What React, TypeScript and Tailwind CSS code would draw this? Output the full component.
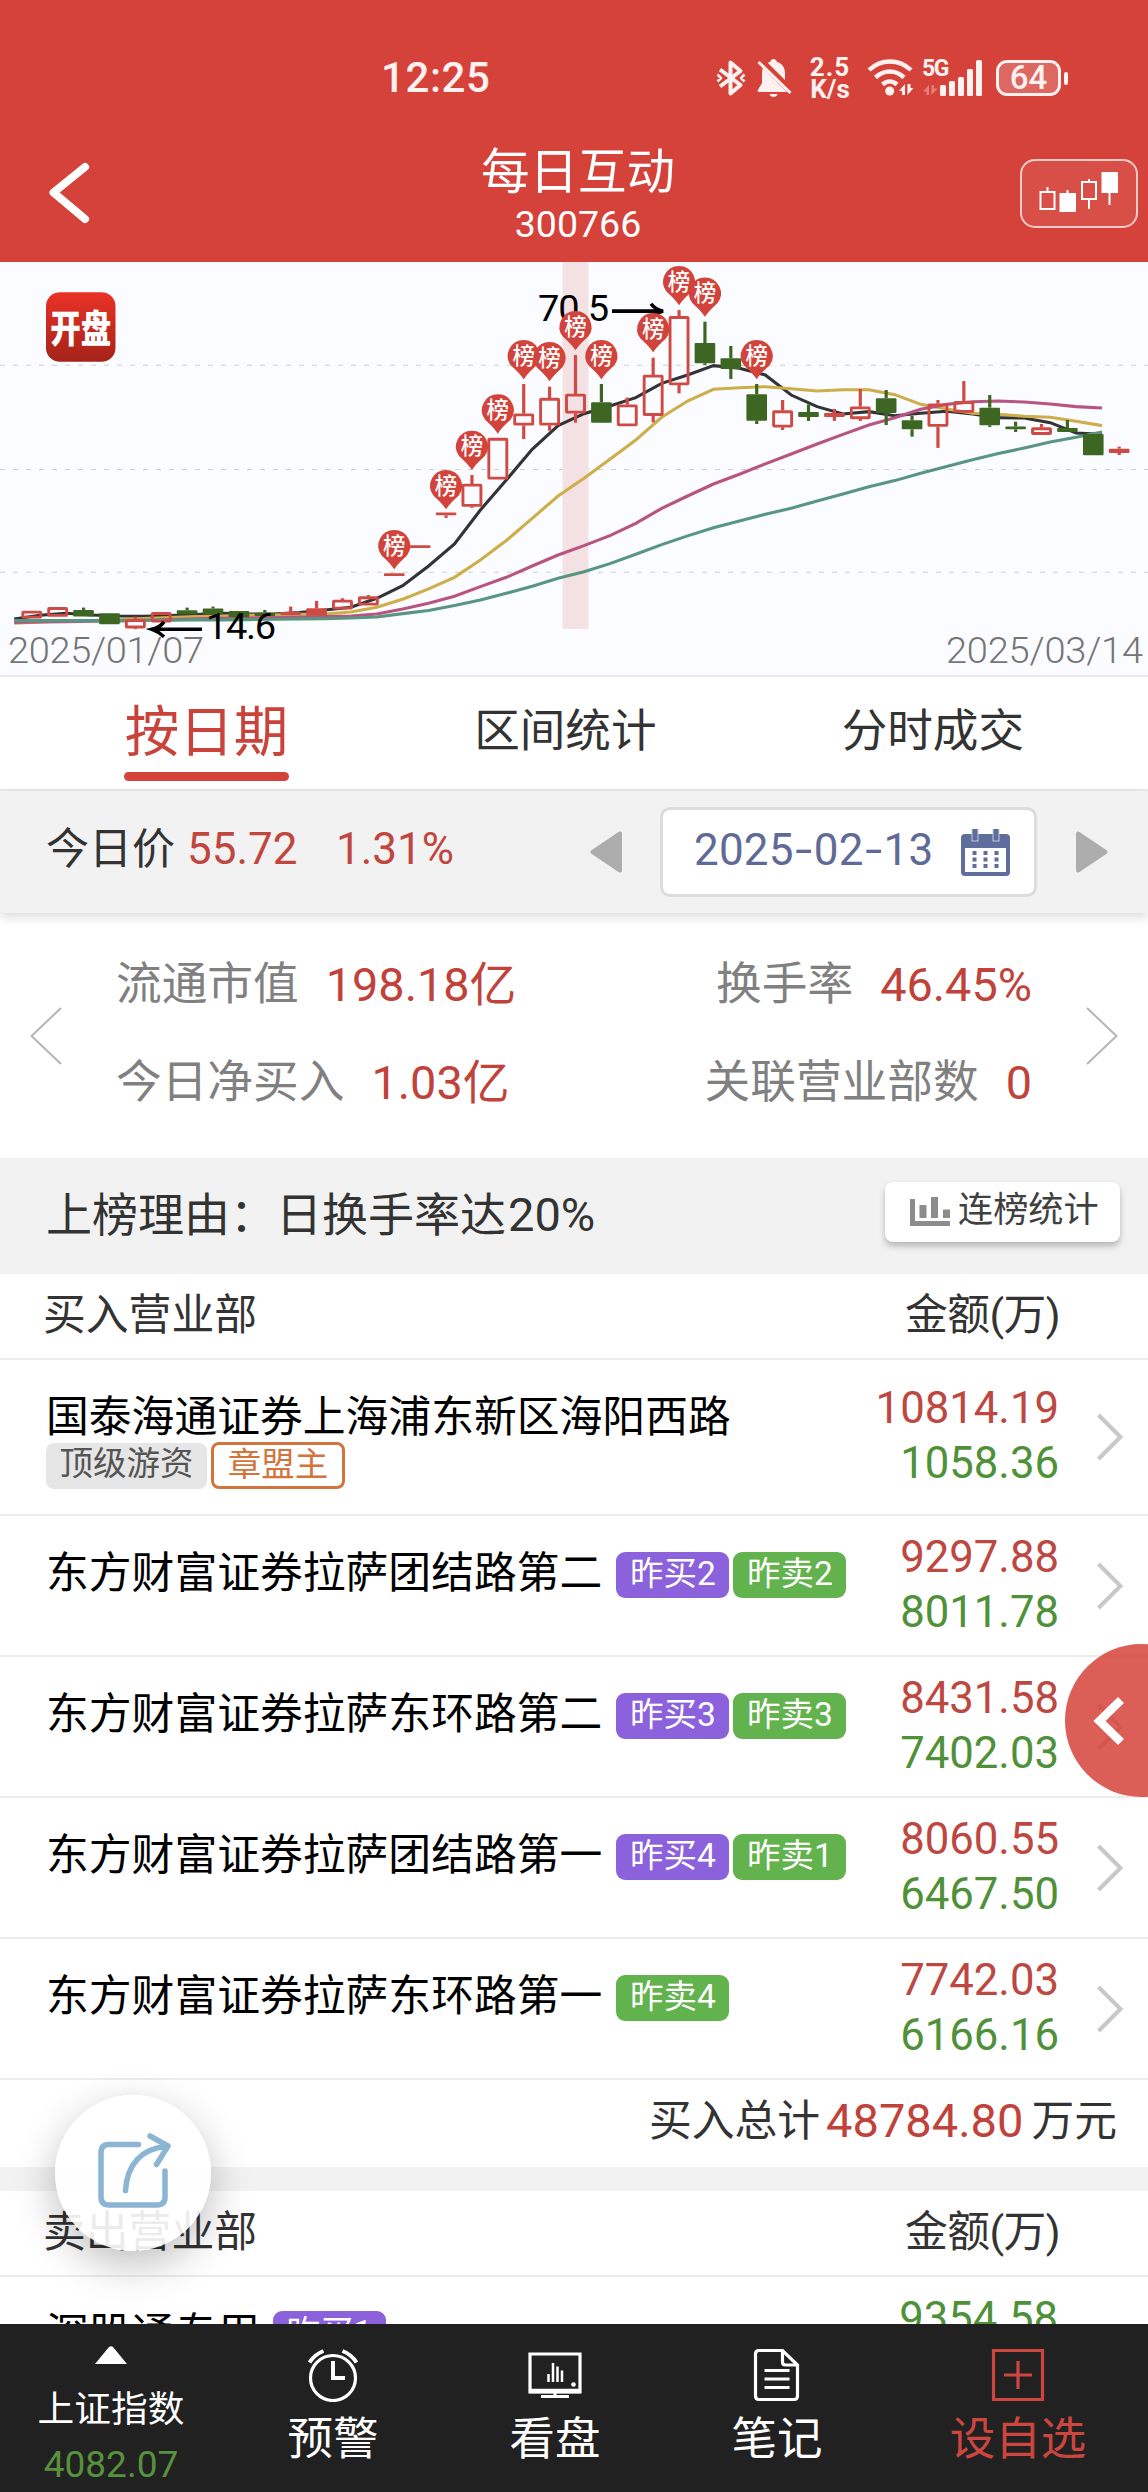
import type { ReactNode } from "react";

interface Candle {
  up: boolean;
  solid?: boolean;
  body: [number, number];
  wick?: [number, number];
  pin?: number;
}

interface Seat {
  name: string;
  tags?: { label: string; kind: "buy" | "sell" }[];
  labels?: boolean;
  buy: string;
  sell: string;
}

const RED = "#cf4a44";
const GREEN = "#3d6622";

const candles: Candle[] = [
  { up: true, body: [613.5, 620.9] },
  { up: true, body: [609.8, 619.2] },
  { up: false, body: [612.5, 619.2], wick: [610.1, 619] },
  { up: false, body: [615.8, 626.9] },
  { up: true, body: [621.9, 630.9], wick: [619.2, 631.9] },
  { up: true, body: [614.8, 624.9] },
  { up: false, body: [612.8, 616.8], wick: [610.1, 616] },
  { up: false, body: [611.1, 616.8], wick: [609.1, 616] },
  { up: false, body: [613.5, 619.9] },
  { up: false, body: [615.2, 618.5], wick: [612.5, 618] },
  { up: true, solid: true, body: [614.5, 617.5], wick: [609.1, 616] },
  { up: true, solid: true, body: [610.8, 618.2], wick: [603.4, 617] },
  { up: true, body: [602.4, 611.8], wick: [600.7, 603] },
  { up: true, body: [599, 607.8], wick: [597.4, 600] },
  { up: true, solid: true, body: [575.6, 578.4], pin: 531.9 },
  { up: true, solid: true, body: [547.4, 550.2] },
  { up: true, solid: true, body: [514.4, 517.2], wick: [516, 519.8], pin: 471.5 },
  { up: true, body: [485.6, 508.4], wick: [476.5, 509.7], pin: 431.9 },
  { up: true, body: [439.3, 480.9], pin: 395.3 },
  { up: true, body: [414.8, 426.5], wick: [384.9, 440.3], pin: 340.6 },
  { up: true, body: [399, 426.5], wick: [387.6, 431.9], pin: 342.6 },
  { up: true, body: [394.9, 414.4], wick: [355.7, 423.8], pin: 311.4 },
  { up: false, body: [403.3, 423.8], wick: [384.9, 424], pin: 340.6 },
  { up: true, body: [405.7, 427.2], wick: [398.6, 407] },
  { up: true, body: [375.8, 416.8], wick: [358.4, 423.5], pin: 313.4 },
  { up: true, body: [316.7, 385.9], wick: [310.4, 394.3], pin: 266 },
  { up: false, body: [343.6, 364], wick: [322.1, 365.7], pin: 277.5 },
  { up: false, body: [359, 369.8], wick: [346.6, 379.8] },
  { up: false, body: [395.3, 421.8], wick: [384.9, 425.2], pin: 340.6 },
  { up: true, body: [411.7, 428.5], wick: [401, 431.2] },
  { up: false, body: [413.1, 418.1], wick: [405.4, 422.1] },
  { up: true, solid: true, body: [414.1, 418.1], wick: [410, 422.1] },
  { up: true, body: [407.7, 420.1], wick: [389.9, 422.1] },
  { up: false, body: [399.3, 414.1], wick: [390.9, 426.2] },
  { up: false, body: [421.5, 430.5], wick: [417.1, 437.9] },
  { up: true, body: [404.7, 427.8], wick: [401, 449.3] },
  { up: true, body: [402.3, 413.7], wick: [381.9, 404] },
  { up: false, body: [408.7, 426.5], wick: [396, 428.2] },
  { up: false, body: [427.7, 430.5], wick: [422.8, 433.2] },
  { up: true, body: [428.8, 435.9], wick: [425.2, 430] },
  { up: false, body: [429.2, 433.2], wick: [421.1, 432] },
  { up: false, body: [435.2, 456.7] },
  { up: true, solid: true, body: [450, 454.4], wick: [448, 456.4] },
];

const averages = [
  {
    color: "#333336",
    values: [
      621.5, 617.8, 615.8, 617.5, 618.5, 618.8, 618.2, 617.2, 615.8, 616.5, 616.5, 615.2, 612.5, 609.8,
      600.7, 588, 568.2, 546, 511.8, 481.6, 450.7, 426.8, 414.8, 407, 398.6, 384.2, 375.8, 366.4, 369.1,
      375.8, 396, 407.7, 415.1, 412.7, 416.8, 414.4, 412.4, 415.1, 418.8, 419.1, 423.8, 434.2, 435.6,
    ],
  },
  {
    color: "#cdae4a",
    values: [
      625.9, 624.5, 623.5, 623.2, 622.5, 621.2, 620.2, 619.2, 618.5, 617.8, 617.5, 616.8, 616.5, 614.5,
      609.8, 601.7, 591.3, 579.6, 562.1, 542.6, 520.2, 497.7, 479.9, 460.7, 441.3, 418.4, 402, 390.2, 388.6,
      387.6, 389.6, 391.9, 390.6, 390.6, 395.6, 405.4, 410, 414.4, 415.4, 417.4, 418.4, 422.5, 426.8,
    ],
  },
  {
    color: "#b85480",
    values: [
      625.2, 624.5, 624.2, 623.9, 623.5, 622.9, 622.2, 621.5, 620.9, 620.5, 620.2, 619.5, 619.2, 618.5,
      616.5, 611.5, 605.8, 598.7, 589, 579.6, 568.2, 557.1, 547.7, 537.6, 525.2, 510.1, 497.7, 485.6, 475.8,
      465.4, 455.4, 445.3, 435.6, 426.2, 418.8, 410.4, 405.4, 402.7, 402, 403, 405, 407.7, 409,
    ],
  },
  {
    color: "#589682",
    values: [
      623.2, 623.2, 623.2, 623.2, 623.2, 622.9, 622.9, 622.5, 622.5, 622.2, 621.9, 621.5, 621.2, 620.5,
      619.5, 616.2, 613.1, 608.1, 602.4, 595.7, 588.6, 580.6, 573.9, 565.8, 556.4, 546.7, 537.9, 529.6, 522.8,
      516.1, 510.1, 502.7, 495.6, 488.3, 482.2, 474.8, 468.1, 461.1, 455, 449.3, 443.3, 438.6, 433.2,
    ],
  },
];

const seats: Seat[] = [
  { name: "国泰海通证券上海浦东新区海阳西路", labels: true, buy: "10814.19", sell: "1058.36" },
  {
    name: "东方财富证券拉萨团结路第二",
    tags: [{ label: "昨买2", kind: "buy" }, { label: "昨卖2", kind: "sell" }],
    buy: "9297.88",
    sell: "8011.78",
  },
  {
    name: "东方财富证券拉萨东环路第二",
    tags: [{ label: "昨买3", kind: "buy" }, { label: "昨卖3", kind: "sell" }],
    buy: "8431.58",
    sell: "7402.03",
  },
  {
    name: "东方财富证券拉萨团结路第一",
    tags: [{ label: "昨买4", kind: "buy" }, { label: "昨卖1", kind: "sell" }],
    buy: "8060.55",
    sell: "6467.50",
  },
  {
    name: "东方财富证券拉萨东环路第一",
    tags: [{ label: "昨卖4", kind: "sell" }],
    buy: "7742.03",
    sell: "6166.16",
  },
];

const candleX = (i: number) => 31.8 + i * 25.89;

function StatusBar() {
  return (
    <div className="flex h-[40px] items-center text-[#fff1f0]">
      <span className="ml-[381px] w-[110px] text-[42px] leading-[40px] font-medium tracking-[0.6px]">12:25</span>
      <svg className="ml-[225px]" width="30" height="38" viewBox="0 0 30 38" fill="none" stroke="currentColor" strokeWidth="4" strokeLinejoin="round">
        <path d="M4 10.5 24.500 26 14.500 34.500V3.500L24.500 12 4 27.500" />
        <path d="M1.500 15.500 5 19l-3.500 3.500M28.500 15.500 25 19l3.500 3.500" strokeWidth="2.500" />
      </svg>
      <svg className="ml-[11px]" width="36" height="40" viewBox="0 0 36 40">
        <path
          fill="currentColor"
          d="M16.500 1c2 0 3 1.500 3.300 2.800C25 5.500 28 9.500 28 15v9l4 7.500c.6 1.200 0 2.500-1.300 2.500H2c-1.200 0-1.800-1.200-1-2.300L5 25V15C5 9.500 8 5.500 13.200 3.800 13.500 2.500 14.500 1 16.500 1ZM12.500 36h8c-.5 2-2 3-4 3s-3.500-1-4-3Z"
        />
        <path d="M1 0 37 36" stroke="#d5423a" strokeWidth="7" />
        <path d="M1.500 4 33.500 35" stroke="currentColor" strokeWidth="3" />
      </svg>
      <div className="ml-[14px] flex w-[46px] flex-col items-center text-[26px] leading-[22px] font-bold">
        <span className="tracking-[1px]">2.5</span>
        <span>K/s</span>
      </div>
      <svg className="ml-[14px]" width="48" height="38" viewBox="0 0 48 38" fill="none" stroke="currentColor" strokeWidth="4.500">
        <path d="M2 11C14-.5 32-.5 44 11M8.500 18.500c8.500-8 20-8 28.500 0M15.500 25.500c4.500-4 10-4 14.500 0" />
        <circle cx="22.700" cy="32" r="4.500" fill="currentColor" stroke="none" />
        <path d="M38 25v11h-3v-4h-3l6-7ZM40.500 25v11l6-7h-3v-4Z" fill="currentColor" stroke="none" />
      </svg>
      <div className="relative ml-[7px] h-[38px] w-[62px]">
        <span className="absolute top-0 left-0 text-[23px] leading-[20px] font-bold tracking-[-1.5px]">5G</span>
        <svg width="62" height="38" viewBox="0 0 62 38" fill="currentColor">
          <path d="M7 26v10H4.500v-3.500H1L7 26ZM9.500 26v10l6-6.500H12V26Z" opacity="0.350" />
          <rect x="18" y="26" width="6" height="11" rx="1.500" />
          <rect x="27" y="22" width="6" height="15" rx="1.500" />
          <rect x="36" y="18" width="6" height="19" rx="1.500" />
          <rect x="45" y="10" width="6" height="27" rx="1.500" />
          <rect x="54" y="1" width="6" height="36" rx="1.500" />
        </svg>
      </div>
      <div className="ml-[12px] flex h-[36px] w-[65px] items-center justify-center rounded-[11px] border-[3px] border-[#fff1f0] bg-white/20 text-[33px] leading-[32px] font-medium">
        64
      </div>
      <div className="ml-[3px] h-[13px] w-[4px] rounded-full bg-[#fff1f0]" />
    </div>
  );
}

function Header() {
  return (
    <header className="h-[262px] shrink-0 bg-[#d5423a] pt-[58px] text-white">
      <StatusBar />
      <div className="mt-[47px] flex items-center justify-between pr-[10px] pl-[44px]">
        <svg className="mb-[7px]" width="48" height="68" viewBox="0 0 48 68" fill="none" stroke="currentColor" strokeWidth="8" strokeLinecap="round" strokeLinejoin="round">
          <path d="M41 8 9.500 33.500 41 60" />
        </svg>
        <div className="ml-[44px] flex flex-col items-center">
          <h1 className="text-[48.500px] leading-[56px]">每日互动</h1>
          <span className="text-[37.500px] leading-[46px]">300766</span>
        </div>
        <div className="mb-[6px] flex h-[69px] w-[118px] items-center justify-center rounded-[15px] border-2 border-white/70 bg-white/[0.07]">
          <svg width="80" height="44" viewBox="0 0 80 44" fill="none" stroke="white" strokeWidth="2">
            <path d="M8.500 16v5M28.500 19v4M50 8v3M50 28v10M70.500 22v12" />
            <rect x="1.500" y="21" width="14" height="17" />
            <rect x="21.500" y="23" width="14.500" height="17" fill="white" />
            <rect x="43" y="11" width="14" height="17" />
            <rect x="63.500" y="2" width="14.500" height="19" fill="white" />
          </svg>
        </div>
      </div>
    </header>
  );
}

function Pin({ x, top }: { x: number; top: number }) {
  return (
    <g transform={`translate(${x} ${top})`}>
      <path d="M0 0a16 16 0 0 1 12.700 25.700C8 30 3.500 34 0 39.600-3.500 34-8 30-12.700 25.700A16 16 0 0 1 0 0Z" fill="#d2433b" />
      <text x="0" y="24" textAnchor="middle" fill="white" fontSize="22.500" fontWeight="500">
        榜
      </text>
    </g>
  );
}

function KLineChart() {
  return (
    <div className="h-[415px] shrink-0 border-b-2 border-[#e6e8ea] bg-[#fbfcff]">
      <svg width="1148" height="413" viewBox="0 262 1148 416" preserveAspectRatio="none">
        <defs>
          <linearGradient id="logo" x1="0" y1="0" x2="0" y2="1">
            <stop offset="0" stopColor="#ea3226" />
            <stop offset="1" stopColor="#a5231a" />
          </linearGradient>
        </defs>
        {[366, 471, 574.5].map((y) => (
          <path key={y} d={`M0 ${y}H1148`} stroke="#cdced2" strokeWidth="1.200" strokeDasharray="5 8" />
        ))}
        <rect x="562.500" y="262" width="26" height="369.500" fill="#f3e1e4" />
        <rect x="46" y="292.500" width="69.500" height="70" rx="14" fill="url(#logo)" />
        <text transform="translate(80.700 343) scale(1 1.250)" textAnchor="middle" fontSize="30.500" fontWeight="900" fill="white">
          开盘
        </text>
        {averages.map((line) => (
          <polyline
            key={line.color}
            points={line.values.map((v, i) => `${14.2 + i * 25.9},${v}`).join(" ")}
            fill="none"
            stroke={line.color}
            strokeWidth="3.100"
          />
        ))}
        {candles.map((c, i) => {
          const x = candleX(i);
          const color = c.up ? RED : GREEN;
          const [top, bottom] = c.body;
          const hollow = c.up && !c.solid;
          return (
            <g key={i} stroke={color}>
              {c.wick && c.wick[0] < top && <path d={`M${x} ${c.wick[0]}V${top}`} strokeWidth="3.200" />}
              {c.wick && c.wick[1] > bottom && <path d={`M${x} ${bottom}V${c.wick[1]}`} strokeWidth="3.200" />}
              {hollow ? (
                <rect x={x - 9} y={top + 1.2} width="18" height={bottom - top - 2.4} rx="0.500" fill="none" strokeWidth="2.900" />
              ) : (
                <rect x={x - 10.3} y={top} width="20.600" height={bottom - top} rx="1" fill={color} stroke="none" />
              )}
            </g>
          );
        })}
        <text x="538" y="321" fontSize="38" textLength="71" fill="black">
          70.5
        </text>
        <path d="M612 311.500H660M651 304Q655 309.500 663 311.500Q655 313.500 649 318.500" fill="none" stroke="black" strokeWidth="3.600" />
        <text x="206" y="642" fontSize="38" textLength="70" fill="black">
          14.6
        </text>
        <path d="M202 632H155M164 624.500Q160 630 152 632Q158 634 164 639.500" fill="none" stroke="black" strokeWidth="3.600" />
        {candles.map((c, i) => c.pin && <Pin key={i} x={candleX(i)} top={c.pin} />)}
        <text x="8" y="666" fontSize="38" fontWeight="300" textLength="196" fill="#757575">
          2025/01/07
        </text>
        <text x="946" y="666" fontSize="38" fontWeight="300" textLength="197" fill="#757575">
          2025/03/14
        </text>
      </svg>
    </div>
  );
}

function Tabs() {
  return (
    <div className="flex h-[114px] shrink-0 items-start justify-between border-b-2 border-[#ebebeb] px-[124px] pt-[24px] text-[45.600px] text-[#333]">
      <div className="flex w-[165px] flex-col items-center text-[#c9433b]">
        <span className="text-[54.500px] leading-[62px]">按日期</span>
        <span className="mt-[9px] h-[9px] w-full rounded-full bg-[#d5423a]" />
      </div>
      <span className="leading-[62px]">区间统计</span>
      <span className="leading-[62px]">分时成交</span>
    </div>
  );
}

function DateBar() {
  return (
    <div className="relative flex h-[122px] shrink-0 items-center bg-[#f2f2f2] shadow-[0_4px_10px_rgba(0,0,0,0.14)]">
      <div className="flex w-[543px] items-center pb-[6px] pl-[46px] text-[43px] leading-[50px]">
        <span className="w-[141px] text-[#333]">今日价</span>
        <span className="w-[149px] text-[44px] text-[#c0463f]">55.72</span>
        <span className="text-[44px] text-[#c0463f]">1.31%</span>
      </div>
      <svg className="ml-[47px]" width="32" height="42" viewBox="0 0 32 42" fill="#adadad" stroke="#adadad" strokeWidth="4" strokeLinejoin="round">
        <path d="M30 2.500v37L2.500 21Z" />
      </svg>
      <div className="ml-[38px] flex h-[90px] w-[377px] items-center rounded-[10px] border-[3px] border-[#dcdcdc] bg-white pl-[31px] text-[#5f6b96]">
        <span className="w-[267px] pb-[4px] text-[44px] leading-[50px] tracking-[0.200px]">
          2025<span className="inline-block w-[20px] scale-x-[1.400] text-center">-</span>02
          <span className="inline-block w-[20px] scale-x-[1.400] text-center">-</span>13
        </span>
        <svg width="49" height="47" viewBox="0 0 49 47">
          <rect x="0" y="5" width="49" height="42" rx="4" fill="#5f6d9d" />
          <rect x="4" y="19" width="41" height="24" fill="white" />
          {[11.5, 22.5, 33.5].map((x) =>
            [22, 28.5, 35].map((y) => <rect key={`${x}-${y}`} x={x} y={y} width="4" height="4" fill="#5f6d9d" />)
          )}
          {[11, 32].map((x) => (
            <rect key={x} x={x} y="-1" width="6" height="13" fill="#5f6d9d" stroke="#c5cae0" strokeWidth="1" />
          ))}
        </svg>
      </div>
      <svg className="ml-[39px]" width="32" height="42" viewBox="0 0 32 42" fill="#adadad" stroke="#adadad" strokeWidth="4" strokeLinejoin="round">
        <path d="M2 2.500v37L29.500 21Z" />
      </svg>
    </div>
  );
}

function Stat({ label, value }: { label: string; value: string }) {
  return (
    <div className="flex items-center leading-[56px]">
      <span className="text-[45.700px] text-[#808080]">{label}</span>
      <span className="ml-[27px] text-[46.800px] text-[#c0423b]">{value}</span>
    </div>
  );
}

function Stats() {
  return (
    <div className="flex h-[245px] shrink-0 items-center justify-between px-[30px]">
      <svg width="32" height="60" viewBox="0 0 32 60" fill="none" stroke="#b5b5b5" strokeWidth="2">
        <path d="M31 2 1.500 30 31 58" />
      </svg>
      <div className="mb-[4px] flex flex-1 flex-col gap-[42px] px-[54px]">
        <div className="flex justify-between">
          <Stat label="流通市值" value="198.18亿" />
          <Stat label="换手率" value="46.45%" />
        </div>
        <div className="flex justify-between">
          <Stat label="今日净买入" value="1.03亿" />
          <Stat label="关联营业部数" value="0" />
        </div>
      </div>
      <svg width="32" height="60" viewBox="0 0 32 60" fill="none" stroke="#b5b5b5" strokeWidth="2">
        <path d="M1 2 30.500 30 1 58" />
      </svg>
    </div>
  );
}

function ReasonBar() {
  return (
    <div className="flex h-[116px] shrink-0 items-center justify-between bg-[#f2f2f2] pr-[28px] pl-[46px]">
      <span className="mb-[2px] text-[46px] leading-[56px] text-[#333]">
        上榜理由：日换手率达<span className="ml-[2px] text-[47px]">20%</span>
      </span>
      <div className="mb-[8px] flex h-[60px] w-[235px] items-center rounded-[8px] bg-white pb-[5px] pl-[25px] shadow-[0_4px_6px_rgba(0,0,0,0.25)]">
        <svg className="mt-[3px]" width="40" height="29" viewBox="0 0 40 29" fill="#8c8c8c">
          <path d="M0 2h5v22h35v5H0ZM9.500 8h7v13h-7ZM21 0h7v21h-7ZM33 12.500h7V21h-7Z" />
        </svg>
        <span className="ml-[8px] text-[35.200px] leading-[44px] text-[#404040]">连榜统计</span>
      </div>
    </div>
  );
}

function TableHead({ title }: { title: string }) {
  return (
    <div className="flex h-[86px] shrink-0 items-center justify-between border-b-2 border-[#ececec] pr-[88px] pb-[2px] pl-[43px] text-[42.800px] leading-[50px] text-[#333]">
      <span>{title}</span>
      <span className="tracking-[-0.600px]">金额(万)</span>
    </div>
  );
}

function Tag({ kind, children }: { kind: "buy" | "sell"; children: ReactNode }) {
  return (
    <span
      className={`flex h-[46px] w-[113px] items-center justify-center rounded-[9px] pb-[2px] text-[33.500px] leading-[40px] text-white ${
        kind === "buy" ? "bg-[#8b62dc]" : "bg-[#62b34d]"
      }`}
    >
      {children}
    </span>
  );
}

function SeatRow({ seat }: { seat: Seat }) {
  return (
    <div className={`flex shrink-0 border-b-2 border-[#ececec] ${seat.labels ? "h-[156px]" : "h-[141px]"}`}>
      <div className="flex-1 pt-[32px] pl-[46px]">
        <div className="flex h-[50px] items-center text-[42.800px] leading-[48px] text-black">
          <span>{seat.name}</span>
          <div className="mt-[3px] ml-[14px] flex gap-[4px]">
            {seat.tags?.map((t) => (
              <Tag key={t.label} kind={t.kind}>
                {t.label}
              </Tag>
            ))}
          </div>
        </div>
        {seat.labels && (
          <div className="flex gap-[4px] text-[33.500px] leading-[38px]">
            <span className="mt-[1px] flex h-[46px] w-[161px] items-center justify-center rounded-[8px] bg-[#e6e6e6] pb-[4px] text-[#555]">
              顶级游资
            </span>
            <span className="flex h-[47px] w-[134px] items-center justify-center rounded-[8px] border-[3px] border-[#d2743c] pb-[2px] text-[#d2743c]">
              章盟主
            </span>
          </div>
        )}
      </div>
      <div className={`w-[190px] text-right text-[43.700px] leading-[55px] ${seat.labels ? "pt-[21px]" : "pt-[14px]"}`}>
        <div className="text-[#bd4841]">{seat.buy}</div>
        <div className="text-[#4f9139]">{seat.sell}</div>
      </div>
      <svg className="mr-[24px] ml-[37px] self-center" width="28" height="48" viewBox="0 0 28 48" fill="none" stroke="#c8c8c8" strokeWidth="4">
        <path d="M2.500 2 24.500 24 2.500 46" />
      </svg>
    </div>
  );
}

function NavItem({ label, icon, active }: { label: string; icon: ReactNode; active?: boolean }) {
  return (
    <div className={`flex flex-col items-center pt-[24px] ${active ? "flex-1 text-[#cc453e]" : "w-[222px] text-white"}`}>
      <svg width="54" height="54" viewBox="0 0 54 54" fill="none" stroke="currentColor" strokeWidth="3.200">
        {icon}
      </svg>
      <span className="mt-[11px] text-[45.500px] leading-[54px]">{label}</span>
    </div>
  );
}

function BottomNav() {
  return (
    <nav className="flex h-[168px] shrink-0 bg-[#212121] text-white">
      <div className="flex w-[222px] flex-col items-center pt-[22px]">
        <svg width="32" height="18" viewBox="0 0 32 18" fill="white">
          <path d="M14 1q2-1.500 4 0l14 17H0Z" />
        </svg>
        <span className="mt-[23px] text-[36.700px] leading-[46px]">上证指数</span>
        <span className="mt-[9px] text-[37px] leading-[46px] text-[#56913d]">4082.07</span>
      </div>
      <NavItem
        label="预警"
        icon={
          <>
            <circle cx="27" cy="30" r="22.500" />
            <path d="M27 13v17h12M3.500 14.500C7 9 11 5.500 17.500 3M50.500 14.500C47 9 43 5.500 36.500 3" strokeWidth="4" />
          </>
        }
      />
      <NavItem
        label="看盘"
        icon={
          <>
            <path d="M2 6h50v38H2Z" />
            <path d="M1.500 43h51" strokeWidth="4.500" />
            <path d="M27 44v4M13 48.500h28" strokeWidth="3.200" />
            <path d="M20.500 26v8M25 15v19M29.500 18.500V34M34 22.500V34" strokeWidth="2.500" />
            <circle cx="45.500" cy="36.500" r="2.300" fill="currentColor" stroke="none" />
          </>
        }
      />
      <NavItem
        label="笔记"
        icon={
          <>
            <path d="M9 2.500h23.500l15 14.500v31q0 3.500-3.500 3.500H9q-3.500 0-3.500-3.500V6q0-3.500 3.500-3.500Z" />
            <path d="M32.500 3v11q0 3 3 3h12M14.500 22.500h25M14.500 31h25M14.500 39.500h25" />
          </>
        }
      />
      <NavItem active label="设自选" icon={<path d="M2.500 2.500h49v49h-49ZM27 13v28M13 27h28" />} />
    </nav>
  );
}

export default function App() {
  return (
    <div className="relative flex h-[2492px] w-[1148px] flex-col overflow-hidden bg-white font-[Roboto,'Noto_Sans_CJK_SC',sans-serif]">
      <Header />
      <main className="flex flex-1 flex-col overflow-hidden">
        <KLineChart />
        <Tabs />
        <DateBar />
        <Stats />
        <ReasonBar />
        <TableHead title="买入营业部" />
        {seats.map((seat) => (
          <SeatRow key={seat.name} seat={seat} />
        ))}
        <div className="flex h-[87px] shrink-0 items-center justify-end pr-[31px] pb-[5px] text-[42.800px] leading-[50px] text-[#333]">
          买入总计
          <span className="mr-[8px] ml-[6px] text-[47px] text-[#c0423b]">48784.80</span>
          万元
        </div>
        <div className="h-[24px] shrink-0 bg-[#f2f2f2]" />
        <TableHead title="卖出营业部" />
        <div className="flex shrink-0 items-start justify-between pr-[90px] pl-[46px]">
          <div className="flex h-[82px] items-center pt-[32px] text-[42.800px] leading-[48px] text-black">
            <span className="mr-[13px]">深股通专用</span>
            <Tag kind="buy">昨买1</Tag>
          </div>
          <span className="pt-[14px] text-[43.700px] leading-[55px] text-[#4f9139]">9354.58</span>
        </div>
      </main>
      <BottomNav />

      {/* Side drawer handle */}
      <div className="absolute top-[1644px] left-[1065px] flex h-[153px] w-[153px] items-center rounded-full bg-[#d5423a]/85 pl-[27px]">
        <svg width="34" height="50" viewBox="0 0 34 50" fill="none" stroke="white" strokeWidth="8.500">
          <path d="M29 4 7.500 25 29 46" />
        </svg>
      </div>

      {/* Share button */}
      <div className="absolute top-[2095px] left-[55px] flex h-[156px] w-[156px] items-center justify-center rounded-full bg-white/90 pb-[6px] shadow-[0_14px_40px_rgba(0,0,0,0.25)]">
        <svg width="76" height="80" viewBox="0 0 76 80" fill="none" stroke="#8cb5d4" strokeWidth="5.500" strokeLinecap="round" strokeLinejoin="round">
          <path d="M43.500 14.500H14q-8 0-8 8V67q0 8 8 8H62q8 0 8-8V41" />
          <path d="M30.500 60.500C32 34 47 18.500 71 16.500M55 6l18 10-11.500 18.500" />
        </svg>
      </div>
    </div>
  );
}
